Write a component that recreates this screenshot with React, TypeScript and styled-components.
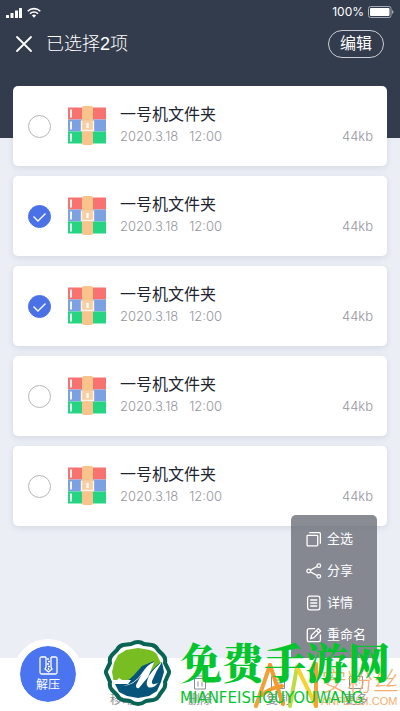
import React, { useState } from "react";
import styled, { createGlobalStyle } from "styled-components";

const Global = createGlobalStyle`
  * { box-sizing: border-box; }
  body {
    margin: 0;
    background: #ebeef5;
    font-family: "Liberation Sans", "Noto Sans CJK SC", sans-serif;
  }
  button { font: inherit; color: inherit; background: none; border: 0; padding: 0; cursor: pointer; }
`;

const Page = styled.div`
  display: flex;
  flex-direction: column;
  min-height: 100vh;
  overflow: hidden;
`;

const Header = styled.header`
  background: #333c4d;
  color: #fff;
  padding-bottom: 77px;
`;

const StatusBar = styled.div`
  display: flex;
  justify-content: space-between;
  align-items: center;
  height: 24px;
  padding: 0 6px;
`;

const StatusGroup = styled.div`
  display: flex;
  align-items: center;
  gap: 4px;
  font-family: Inter, sans-serif;
  font-size: 12px;
  line-height: 16px;
`;

const TitleBar = styled.div`
  display: flex;
  align-items: center;
  height: 34px;
  padding: 0 16px 0 15px;
  margin-top: 3px;
`;

const CloseButton = styled.button`
  display: flex;
`;

const Title = styled.h1`
  flex: 1;
  margin: 0 0 0 13px;
  font-size: 18px;
  line-height: 26px;
  font-weight: 300;
`;

const EditButton = styled.button`
  && {
    height: 28px;
    padding: 0 11px;
    border: 1px solid #c9cdd5;
    border-radius: 14px;
    font-size: 16px;
    line-height: 24px;
  }
`;

const List = styled.ul`
  flex: 1;
  display: flex;
  flex-direction: column;
  gap: 10px;
  list-style: none;
  margin: -52px 0 0;
  padding: 0 13px 131px;
`;

const Card = styled.li`
  display: flex;
  align-items: center;
  height: 80px;
  padding: 0 14px 0 15px;
  border-radius: 5px;
  background: #fff;
  box-shadow: 0 2px 6px rgba(60, 70, 100, 0.12);
`;

const Check = styled.input`
  appearance: none;
  flex: none;
  width: 23px;
  height: 23px;
  margin: 0 16px 0 0;
  border: 1px solid #b4b6ba;
  border-radius: 50%;
  background: #fff;
  &:checked {
    border-color: #4a72e6;
    background: #4a72e6
      url("data:image/svg+xml,%3Csvg xmlns='http://www.w3.org/2000/svg' viewBox='0 0 21 21'%3E%3Cpath d='M4.5 10.5l4.5 4.5 7.500-7.500' fill='none' stroke='white' stroke-width='1.4'/%3E%3C/svg%3E")
      center / 21px 21px no-repeat;
  }
`;

const FileInfo = styled.label`
  flex: 1;
  margin-left: 13px;
  padding-bottom: 2px;
`;

const FileName = styled.span`
  display: block;
  color: #20242f;
  font-size: 16px;
  font-weight: 400;
  line-height: 22px;
`;

const Meta = styled.div`
  display: flex;
  gap: 11px;
  color: #93969d;
  font-family: Inter, sans-serif;
  font-size: 13px;
  font-weight: 300;
  line-height: 20px;
`;

const Size = styled(Meta)`
  align-self: flex-end;
  margin-bottom: 20px;
`;

const Bottom = styled.footer`
  position: relative;
  display: flex;
  align-items: flex-end;
  height: 53px;
  background: #fff;
`;

const Extract = styled.button`
  && {
    flex: none;
    display: flex;
    flex-direction: column;
    align-items: center;
    justify-content: center;
    width: 70px;
    height: 70px;
    margin: 0 0 2px 13px;
    border: 7px solid #fff;
    border-radius: 50%;
    background: #4b75f0;
    background-clip: padding-box;
    color: #fff;
    font-size: 12px;
    line-height: 16px;
    gap: 2px;
  }
`;

const Nav = styled.nav`
  flex: 1;
  display: grid;
  grid-template-columns: repeat(4, 1fr);
  margin-right: 5px;
`;

const NavButton = styled.button`
  && {
    display: flex;
    flex-direction: column;
    align-items: center;
    gap: 2px;
    padding-bottom: 3px;
    color: #8b8d94;
    font-size: 12px;
    line-height: 16px;
  }
`;

const Menu = styled.div`
  position: absolute;
  right: 23px;
  bottom: 100%;
  width: 86px;
  height: 143px;
  padding-top: 8px;
  border-radius: 5px 5px 0 0;
  background: rgba(104, 107, 117, 0.78);
  color: #fff;
`;

const MenuItem = styled.button`
  && {
    display: flex;
    align-items: center;
    gap: 5px;
    width: 100%;
    height: 32px;
    padding-left: 15px;
    font-size: 13px;
    line-height: 20px;
    white-space: nowrap;
  }
`;

const SiteMark = styled.div`
  position: absolute;
  left: 104px;
  bottom: 5px;
  display: flex;
  align-items: flex-end;
  gap: 9px;
  pointer-events: none;
`;

const SiteText = styled.div`
  color: #05c52f;
  white-space: nowrap;
`;

const SiteName = styled.div`
  margin-bottom: 6px;
  font-family: "Noto Serif CJK SC", "Noto Sans CJK SC", serif;
  font-size: 42px;
  font-weight: 900;
  line-height: 46px;
`;

const SiteLatin = styled.div`
  font-family: "DejaVu Sans", sans-serif;
  font-size: 15px;
  font-weight: 400;
  line-height: 16px;
`;

const FanMark = styled.div`
  position: absolute;
  left: 252px;
  bottom: 0;
  display: flex;
  align-items: flex-end;
  color: #f4ae70;
  pointer-events: none;
`;

const FanText = styled.div`
  margin: 0 0 3px 1px;
  white-space: nowrap;
`;

const FanName = styled.div`
  font-size: 26px;
  font-weight: 300;
  line-height: 28px;
  font-family: "Noto Sans CJK SC", sans-serif;
`;

const FanSite = styled.div`
  font-size: 11px;
  line-height: 14px;
`;

const Signal = () => (
  <svg width="17" height="11" viewBox="0 0 17 11" fill="#fff" aria-hidden="true">
    <rect x="0" y="8" width="3" height="3" rx=".5" />
    <rect x="4.5" y="6" width="3" height="5" rx=".5" />
    <rect x="9" y="3.5" width="3" height="7.5" rx=".5" />
    <rect x="13" y="1" width="3" height="10" rx=".5" />
  </svg>
);

const Wifi = () => (
  <svg width="14" height="11" viewBox="0 0 14 11" fill="none" stroke="#fff" strokeWidth="1.6" aria-hidden="true">
    <path d="M.7 4.2a9 9 0 0 1 12.6 0M3 6.7a5.7 5.7 0 0 1 8 0" />
    <path d="M4.9 8.6a3 3 0 0 1 4.2 0L7 10.7z" fill="#fff" stroke="none" />
  </svg>
);

const Battery = () => (
  <svg width="26" height="12" viewBox="0 0 26 12" aria-hidden="true">
    <rect x=".5" y=".5" width="22.5" height="11" rx="2" fill="none" stroke="#a5aab4" />
    <rect x="2" y="2" width="19.5" height="8" rx="1" fill="#fff" />
    <path d="M24 4v4q1.5-.5 1.5-2T24 4z" fill="#a5aab4" />
  </svg>
);

const Archive = () => (
  <svg width="40" height="40" viewBox="0 0 40 40" aria-hidden="true">
    <path d="M1 1.500h38v12H1z" fill="#f8736f" />
    <path d="M1 13.500h38v12H1z" fill="#7ba1e3" />
    <path d="M1 25.500h38v12H1z" fill="#25d581" />
    <path d="M4 3.500v8M4 15.500v8M4 27.500v8" stroke="#fff" strokeWidth="1.800" />
    <path d="M15 2q0-2 2-2h7q2 0 2 2v35q0 2-2 2h-7q-2 0-2-2z" fill="#f9c38c" />
    <path d="M14.500 14.500v10h12v-10" fill="#f6cfa4" stroke="#fff3e6" strokeWidth="1.400" />
    <path d="M20.500 17v5" stroke="#fff" strokeWidth="2.200" />
  </svg>
);

const menuIcons: Record<string, React.ReactNode> = {
  全选: (
    <>
      <rect x="1" y="4" width="10" height="10" rx=".8" />
      <path d="M3 1.500h9.500q1 0 1 1V12" />
    </>
  ),
  分享: (
    <>
      <circle cx="2.500" cy="7.500" r="1.700" />
      <circle cx="12" cy="2.500" r="1.700" />
      <circle cx="12" cy="12.500" r="1.700" />
      <path d="M4.200 6.700l6.200-3.400M4.200 8.300l6.200 3.400" />
    </>
  ),
  详情: (
    <>
      <rect x="1.500" y="1" width="11.500" height="13" rx="2" />
      <path d="M4 4.700h6.500M4 7.500h6.500M4 10.300h6.500" />
    </>
  ),
  重命名: (
    <>
      <path d="M8.500 1.500H3q-1.800 0-1.800 1.800v8.700q0 1.800 1.800 1.800h9q1.500 0 1.500-1.800V7" />
      <path d="M4.500 10.800l.7-3 6.300-6.300 2.200 2.200-6.300 6.300zM9.600 3.200l2.200 2.200" />
    </>
  ),
};

const navIcons: Record<string, React.ReactNode> = {
  移动: <path d="M1.500 13V2.500H6L7.500 4.500h7V13zM5 9h5M8.500 7l2 2-2 2" />,
  删除: <path d="M1 3.500h14M2.500 3.500V14h11V3.500M6 6.500v5M10 6.500v5M5.500 1h5" />,
  复制: <path d="M1.500 1.500h13v12h-13zM4.500 5h7M4.500 8h7" />,
  更多: <path d="M1.500 1.500h13v12h-13zM5 8h.5M8 8h.5M11 8h.5" />,
};

const SiteLogo = () => (
  <svg width="67" height="66" viewBox="0 0 67 66" aria-hidden="true">
    <path
      d="M34 2q3 0 6 2l8 1q4 1 6 5l5 5q3 3 2 8l3 6q2 3 0 6l-3 7q1 5-2 8l-3 4q-2 5-7 6l-7 1q-4 3-8 3t-8-3l-7-1q-4-1-6-5l-5-5q-3-3-2-8l-3-7q-2-3 0-6l3-6q-1-5 2-8l5-5q2-4 6-5l8-1q4-2 7-2z"
      fill="#fff"
      stroke="#086455"
      strokeWidth="4"
      strokeLinejoin="round"
    />
    <path d="M34 8l12 2q7 2 8 7l3 6L42 38 30 38 20 43H10L8 32l2-9 4-8 8-5z" fill="#78bd22" />
    <path d="M58 22l2 10-3 10-4 9-8 5-11 2-11-2-8-4-4-8q11 0 19-9l8-9 12-5-6 13 9-9z" fill="#07547b" />
    <path
      d="M19 46q12-2 19-13 6-9 12-11-2 6-6 15 8-11 14-15-6 9-10 19-1 5 6 2-5 6-10 4-3-3 1-11-6 7-10 12-3 1-3-3 3-6 6-11-7 11-19 12z"
      fill="#fff"
    />
    <path d="M8 40l5 0 2-2 3 2h9l-3 4H11z" fill="#fff" />
  </svg>
);

const FanLogo = () => (
  <svg width="68" height="50" viewBox="0 0 68 50" fill="none" strokeWidth="4" strokeLinecap="round" aria-hidden="true">
    <path d="M4 45L18 4" stroke="#f4a039" />
    <path d="M18 4l13 39M10 34q10-8 20-9" stroke="#f29a2e" />
    <path d="M38 45L45 6" stroke="#bcdc43" />
    <path d="M45 6l19 39" stroke="#f5d333" />
    <path d="M64 45V3" stroke="#f2a23a" />
  </svg>
);

export default function App() {
  const [checked, setChecked] = useState([false, true, true, false, false]);
  const toggle = (index: number) =>
    setChecked(checked.map((value, i) => (i === index ? !value : value)));

  return (
    <Page>
      <Global />
      <Header>
        <StatusBar>
          <StatusGroup>
            <Signal />
            <Wifi />
          </StatusGroup>
          <StatusGroup>
            100%
            <Battery />
          </StatusGroup>
        </StatusBar>
        <TitleBar>
          <CloseButton aria-label="关闭">
            <svg width="18" height="18" viewBox="0 0 18 18" stroke="#fff" strokeWidth="1.8" strokeLinecap="round">
              <path d="M2 2l14 14M16 2L2 16" />
            </svg>
          </CloseButton>
          <Title>已选择2项</Title>
          <EditButton>编辑</EditButton>
        </TitleBar>
      </Header>

      <List>
        {checked.map((value, i) => (
          <Card key={i}>
            <Check id={`file-${i}`} type="checkbox" checked={value} onChange={() => toggle(i)} />
            <Archive />
            <FileInfo htmlFor={`file-${i}`}>
              <FileName>一号机文件夹</FileName>
              <Meta as="span">
                <span>2020.3.18</span>
                <span>12:00</span>
              </Meta>
            </FileInfo>
            <Size>44kb</Size>
          </Card>
        ))}
      </List>

      <Bottom>
        <Extract>
          <svg width="19" height="19" viewBox="0 0 19 19" fill="none" stroke="#fff" strokeWidth="1.300" aria-hidden="true">
            <path d="M7 1H2.500Q1 1 1 2.500v14Q1 18 2.500 18h14q1.500 0 1.500-1.500v-14Q18 1 16.500 1H12" />
            <path d="M7 1v10l-1 2 3.500 3 3.500-3-1-2V1M8 3h2M9 5.500h2M8 8h2M9 10.500h2M9.500 12v2" />
          </svg>
          解压
        </Extract>
        <Nav>
          {Object.entries(navIcons).map(([label, icon]) => (
            <NavButton key={label}>
              <svg width="16" height="15" viewBox="0 0 16 15" fill="none" stroke="currentColor" aria-hidden="true">
                {icon}
              </svg>
              {label}
            </NavButton>
          ))}
        </Nav>
        <Menu>
          {Object.entries(menuIcons).map(([label, icon]) => (
            <MenuItem key={label}>
              <svg width="16" height="16" viewBox="0 0 15 15" fill="none" stroke="#fff" strokeWidth="1.200" aria-hidden="true">
                {icon}
              </svg>
              {label}
            </MenuItem>
          ))}
        </Menu>
        <FanMark>
          <FanLogo />
          <FanText>
            <FanName>安粉丝</FanName>
            <FanSite>ANFENSI.COM</FanSite>
          </FanText>
        </FanMark>
        <SiteMark>
          <SiteLogo />
          <SiteText>
            <SiteName>免费手游网</SiteName>
            <SiteLatin>MIANFEISHOUYOUWANG</SiteLatin>
          </SiteText>
        </SiteMark>
      </Bottom>
    </Page>
  );
}
